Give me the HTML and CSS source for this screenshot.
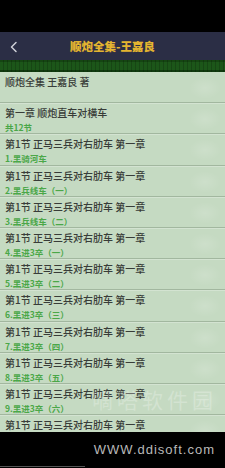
FILE: index.html
```html
<!DOCTYPE html>
<html lang="zh">
<head>
<meta charset="utf-8">
<title>顺炮全集-王嘉良</title>
<link rel="stylesheet" href="styles.css">
</head>
<body>
<div class="page">
  <div class="status"></div>
  <div class="nav">
    <svg class="back" width="10" height="12" viewBox="0 0 10 12"><polyline points="7,1.5 2.5,6 7,10.5" fill="none" stroke="#cfd0d8" stroke-width="1.5" stroke-linecap="round" stroke-linejoin="round"/></svg>
    <div class="title">顺炮全集-王嘉良</div>
  </div>
  <div class="strip"></div>
  <div class="list">
    <div class="row intro"><div class="t">顺炮全集 王嘉良 著</div></div>
    <div class="row"><div class="t">第一章 顺炮直车对横车</div><div class="s">共12节</div></div>
    <div class="row"><div class="t">第1节 正马三兵对右肋车 第一章</div><div class="s">1.黑骑河车</div></div>
    <div class="row"><div class="t">第1节 正马三兵对右肋车 第一章</div><div class="s">2.黑兵线车（一）</div></div>
    <div class="row"><div class="t">第1节 正马三兵对右肋车 第一章</div><div class="s">3.黑兵线车（二）</div></div>
    <div class="row"><div class="t">第1节 正马三兵对右肋车 第一章</div><div class="s">4.黑进3卒（一）</div></div>
    <div class="row"><div class="t">第1节 正马三兵对右肋车 第一章</div><div class="s">5.黑进3卒（二）</div></div>
    <div class="row"><div class="t">第1节 正马三兵对右肋车 第一章</div><div class="s">6.黑进3卒（三）</div></div>
    <div class="row"><div class="t">第1节 正马三兵对右肋车 第一章</div><div class="s">7.黑进3卒（四）</div></div>
    <div class="row"><div class="t">第1节 正马三兵对右肋车 第一章</div><div class="s">8.黑进3卒（五）</div></div>
    <div class="row"><div class="t">第1节 正马三兵对右肋车 第一章</div><div class="s">9.黑进3卒（六）</div></div>
    <div class="row"><div class="t">第1节 正马三兵对右肋车 第一章</div></div>
    <div class="watermark">嘀嗒软件园</div>
  </div>
  <div class="bottom">
    <div class="site">WWW.ddisoft.com</div>
    <div class="homeline"></div>
  </div>
</div>
</body>
</html>
```

FILE: styles.css
```css
html, body {
  margin: 0;
  padding: 0;
}
body {
  width: 225px;
  height: 468px;
  overflow: hidden;
  background: #000;
  font-family: "Noto Sans CJK SC", "Noto Sans", sans-serif;
}
.page {
  display: flex;
  flex-direction: column;
  height: 468px;
}
.status {
  height: 32px;
  background: #000;
  flex: none;
}
.nav {
  height: 28px;
  flex: none;
  background: #2b2e45;
  display: flex;
  align-items: center;
  justify-content: center;
  position: relative;
}
.back {
  position: absolute;
  left: 9px;
  top: 9px;
}
.title {
  color: #e3b430;
  font-size: 11.5px;
  font-weight: 900;
  line-height: 14px;
  font-family: "Noto Sans CJK SC", serif;
  margin-top: -1px;
}
.strip {
  height: 12px;
  flex: none;
  background-color: #184d15;
  background-image:
    repeating-linear-gradient(90deg, transparent 0 3px, rgba(0,0,0,0.18) 3px 4px),
    linear-gradient(180deg, #154512 0 2px, #1c5619 2px 10px, #103a0e 10px);
}
.list {
  flex: 1;
  overflow: hidden;
  background: #c5dac2;
  position: relative;
}
.row {
  height: 26.2px;
  border-bottom: 1px solid #a2b79f;
  box-shadow: 0 1px 0 rgba(255,255,255,0.25);
  padding: 4px 0 0 5px;
  box-sizing: content-box;
  background: radial-gradient(ellipse 16px 11px at 205px 16px, rgba(255,255,255,0.14), transparent 100%);
}
.row .t, .row .s {
  white-space: nowrap;
}
.t {
  font-size: 10px;
  line-height: 12px;
  color: #383c38;
  font-weight: 500;
}
.s {
  font-size: 8.5px;
  line-height: 11px;
  margin-top: 3px;
  color: #4aa748;
  font-weight: 700;
}
.watermark {
  position: absolute;
  left: 92px;
  top: 314px;
  font-size: 21px;
  line-height: 26px;
  letter-spacing: 4px;
  color: rgba(255,255,255,0.25);
  white-space: nowrap;
}
.bottom {
  height: 36px;
  flex: none;
  background: #000;
  position: relative;
  display: flex;
  justify-content: flex-end;
  align-items: flex-start;
}
.site {
  margin: 10px 10px 0 0;
  font-family: "Liberation Sans", sans-serif;
  font-size: 13px;
  letter-spacing: 1px;
  line-height: 16px;
  color: #b9b9b9;
}
.homeline {
  position: absolute;
  left: 0;
  bottom: 1px;
  width: 85px;
  height: 1px;
  background: #555;
}
```
